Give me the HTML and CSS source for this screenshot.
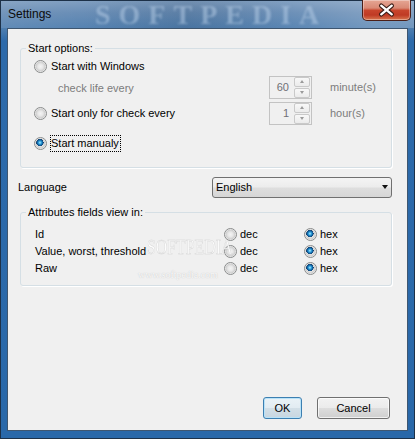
FILE: index.html
```html
<!DOCTYPE html>
<html>
<head>
<meta charset="utf-8">
<title>Settings</title>
<link rel="stylesheet" href="styles.css">
</head>
<body>
<div class="window">
  <div class="titlebar">
    <span class="title">Settings</span>
    <span class="wm-title">SOFTPEDIA</span>
    <button class="close" type="button" aria-label="Close">
      <svg width="49" height="20" viewBox="0 0 49 20">
        <path d="M19 5.5 L30 14.5 M30 5.5 L19 14.5" stroke="#3b1d17" stroke-width="4.6" stroke-linecap="round" fill="none"/>
        <path d="M19 5.5 L30 14.5 M30 5.5 L19 14.5" stroke="#ffffff" stroke-width="2.4" stroke-linecap="round" fill="none"/>
      </svg>
    </button>
  </div>
  <div class="client">
    <div class="group g1">
      <div class="legend">Start options:</div>
      <div class="opt-row h18">
        <div class="choice"><span class="radio"></span><span class="lbl">Start with Windows</span></div>
      </div>
      <div class="opt-row h23">
        <span class="sub muted">check life every</span>
        <span class="spin"><span class="spin-val">60</span><span class="spin-btns"><span class="sb up"></span><span class="sb down"></span></span></span>
        <span class="unit muted">minute(s)</span>
      </div>
      <div class="opt-row h23 mt3">
        <div class="choice"><span class="radio"></span><span class="lbl">Start only for check every</span></div>
        <span class="spin"><span class="spin-val">1</span><span class="spin-btns"><span class="sb up"></span><span class="sb down"></span></span></span>
        <span class="unit muted">hour(s)</span>
      </div>
      <div class="opt-row h18 mt10">
        <div class="choice"><span class="radio on"></span><span class="lbl focus">Start manualy</span></div>
      </div>
    </div>

    <div class="lang-row">
      <span class="lang-label">Language</span>
      <div class="select"><span class="select-text">English</span><span class="arrow"></span></div>
    </div>

    <div class="group g2">
      <div class="legend">Attributes fields view in:</div>
      <div class="attr-rows">
        <div class="attr-row">
          <span>Id</span>
          <div class="choice"><span class="radio"></span><span class="lbl2">dec</span></div>
          <div class="choice"><span class="radio on"></span><span class="lbl2">hex</span></div>
        </div>
        <div class="attr-row">
          <span>Value, worst, threshold</span>
          <div class="choice"><span class="radio"></span><span class="lbl2">dec</span></div>
          <div class="choice"><span class="radio on"></span><span class="lbl2">hex</span></div>
        </div>
        <div class="attr-row">
          <span>Raw</span>
          <div class="choice"><span class="radio"></span><span class="lbl2">dec</span></div>
          <div class="choice"><span class="radio on"></span><span class="lbl2">hex</span></div>
        </div>
      </div>
    </div>

    <div class="buttons">
      <button class="btn ok" type="button">OK</button>
      <button class="btn cancel" type="button">Cancel</button>
    </div>

    <span class="wm-mid">SOFTPEDIA</span>
    <span class="wm-url">www.softpedia.com</span>
  </div>
</div>
</body>
</html>
```
FILE: styles.css
```css
html, body {
  margin: 0;
  padding: 0;
  background: #2b66a3;
}
.window {
  width: 415px;
  height: 439px;
  box-sizing: border-box;
  border: 1px solid #1d3148;
  background:
    linear-gradient(180deg, #7b9bbe 0px, #6389b3 12px, #4f7eaf 27px, #2d6aaa 40px, #2968a9 100%);
  font-family: "Liberation Sans", Arial, sans-serif;
  font-size: 11px;
  color: #000;
  display: flex;
  flex-direction: column;
}
.titlebar {
  position: relative;
  height: 27px;
  display: flex;
  align-items: flex-start;
  background: linear-gradient(90deg, rgba(255,255,255,0.10) 0%, rgba(255,255,255,0.04) 20%, rgba(0,0,0,0.08) 45%, rgba(255,255,255,0.06) 70%, rgba(255,255,255,0.20) 90%);
}
.title {
  margin: 6px 0 0 7px;
  font-size: 12px;
  line-height: 15px;
  color: #0b0b0b;
  position: relative;
  z-index: 2;
}
.wm-title {
  position: absolute;
  left: 94px;
  top: 1px;
  font-family: "Liberation Serif", serif;
  font-weight: bold;
  font-size: 28px;
  letter-spacing: 8px;
  line-height: 26px;
  color: rgba(185, 208, 232, 0.5);
  filter: blur(0.9px);
  pointer-events: none;
}
.close {
  margin: -1px 3px 0 auto;
  width: 49px;
  height: 21px;
  padding: 0;
  border: 1px solid #4b1f18;
  border-top: none;
  border-radius: 0 0 5px 5px;
  background: linear-gradient(180deg, #e5a694 0%, #d98975 40%, #c8452c 52%, #bf3a24 75%, #d8774f 100%);
  box-shadow: inset 0 0 0 1px rgba(255,255,255,0.35);
  display: flex;
  align-items: center;
  justify-content: center;
  position: relative;
  z-index: 2;
}
.close svg { display: block; }

.client {
  position: relative;
  margin: 0 6px 7px 6px;
  border: 1px solid #3e5670;
  height: 372px;
  background: #f0f0f0;
  padding: 19px 15px 11px 10px;
  box-sizing: content-box;
  display: flex;
  flex-direction: column;
}

.group {
  margin-left: 2px;
  border: 1px solid #d5dfe5;
  border-radius: 3px;
  box-shadow: 1px 1px 0 #ffffff;
  box-sizing: border-box;
}
.g1 {
  height: 120px;
  padding-left: 13px;
}
.legend {
  display: table;
  margin: -8px 0 0 4px;
  padding: 0 2px;
  background: #f0f0f0;
  line-height: 14px;
  height: 14px;
}
.g1 .legend { margin-left: -8px; }
.opt-row {
  display: grid;
  grid-template-columns: 217px 43px auto;
  column-gap: 18px;
  align-items: center;
}
.h18 { height: 18px; margin-top: 3px; }
.h23 { height: 23px; }
.mt3 { margin-top: 3px; }
.mt10 { margin-top: 10px; }

.choice {
  display: flex;
  align-items: center;
}
.opt-row .choice { grid-column: 1 / 2; white-space: nowrap; }
.radio {
  flex: none;
  width: 13px;
  height: 13px;
  box-sizing: border-box;
  border-radius: 50%;
  border: 1px solid #8a8c8c;
  background: radial-gradient(circle, #f3f3f3 0, #e8e8e8 2.5px, #cfcfcf 4.5px, #f2f2f2 5.5px);
}
.radio.on {
  background:
    radial-gradient(circle 3.6px at 45% 42%, #b6ecff 0, #35a6e0 1.4px, #0f65a5 2.6px, #183f6a 3.6px, transparent 3.7px),
    radial-gradient(circle, #f3f3f3 0, #e8e8e8 2.5px, #cfcfcf 4.5px, #f2f2f2 5.5px);
}
.lbl {
  margin-left: 4px;
  line-height: 15px;
  white-space: nowrap;
}
.lbl.focus {
  margin-left: 3px;
  border: 1px dotted #000;
  padding: 0 1px 0 0;
}
.lbl2 {
  margin-left: 3px;
  line-height: 15px;
}
.muted { color: #7c7c7c; }
.sub { padding-left: 24px; padding-top: 2px; white-space: nowrap; }
.unit { white-space: nowrap; }

.spin {
  box-sizing: border-box;
  width: 43px;
  height: 23px;
  border: 1px solid #c3c3c3;
  background: #f0f0f0;
  display: flex;
  align-items: center;
}
.spin-val {
  width: 24px;
  box-sizing: border-box;
  text-align: right;
  padding-right: 5px;
  color: #6f6f76;
}
.spin-btns {
  display: flex;
  flex-direction: column;
  gap: 1px;
  width: 16px;
  margin-right: 1px;
}
.sb {
  box-sizing: border-box;
  height: 10px;
  border: 1px solid #c9c9c9;
  border-radius: 2px;
  background: linear-gradient(180deg, #f8f8f8, #ebebeb);
  display: flex;
  align-items: center;
  justify-content: center;
}
.sb::after {
  content: "";
  width: 0;
  height: 0;
  border-left: 2.5px solid transparent;
  border-right: 2.5px solid transparent;
}
.sb.up::after { border-bottom: 3px solid #9a9a9a; }
.sb.down::after { border-top: 3px solid #9a9a9a; }

.lang-row {
  margin-top: 9px;
  height: 21px;
  display: flex;
  align-items: center;
}
.lang-label {
  width: 194px;
  flex: none;
}
.select {
  box-sizing: border-box;
  width: 180px;
  height: 21px;
  border: 1px solid #707070;
  border-radius: 3px;
  background: linear-gradient(180deg, #f4f4f4 0%, #ececec 48%, #dedede 52%, #d6d6d6 100%);
  display: flex;
  align-items: center;
  padding: 0 3px 0 3px;
}
.select-text { flex: 1; }
.arrow {
  width: 0;
  height: 0;
  border-left: 3.5px solid transparent;
  border-right: 3.5px solid transparent;
  border-top: 4px solid #111;
}

.g2 {
  margin-top: 14px;
  height: 74px;
  padding-left: 14px;
}
.g2 .legend { margin-left: -9px; }
.attr-rows { margin-top: 7px; }
.attr-row {
  display: grid;
  grid-template-columns: 189px 80px auto;
  height: 17px;
  align-items: center;
  line-height: 15px;
}

.buttons {
  margin-top: auto;
  display: flex;
  justify-content: flex-end;
  gap: 15px;
  padding-right: 2px;
}
.btn {
  height: 22px;
  padding: 0;
  font-family: "Liberation Sans", Arial, sans-serif;
  font-size: 11px;
  color: #000;
  border: 1px solid #707070;
  border-radius: 3px;
  background: linear-gradient(180deg, #f2f2f2 0%, #ebebeb 48%, #dddddd 52%, #cfcfcf 100%);
  box-shadow: inset 0 0 0 1px rgba(255,255,255,0.7);
}
.ok {
  width: 39px;
  border-color: #3c7fb1;
  background: linear-gradient(180deg, #eaf2f7 0%, #e2ecf2 48%, #d2dfe7 52%, #c8d6e0 100%);
  box-shadow: inset 0 0 0 1px #b8e2f8;
}
.cancel { width: 73px; }

.wm-mid {
  position: absolute;
  left: 139px;
  top: 206px;
  font-family: "Liberation Serif", serif;
  font-size: 22px;
  line-height: 24px;
  color: rgba(255,255,255,0.85);
  -webkit-text-stroke: 0.5px rgba(190,190,190,0.6);
  transform: scaleX(0.72);
  transform-origin: left center;
  pointer-events: none;
}
.wm-url {
  position: absolute;
  left: 130px;
  top: 240px;
  font-family: "Liberation Serif", serif;
  font-size: 10px;
  line-height: 12px;
  color: rgba(255,255,255,0.9);
  text-shadow: 0 0 1px rgba(150,150,150,0.6);
  pointer-events: none;
}
```
